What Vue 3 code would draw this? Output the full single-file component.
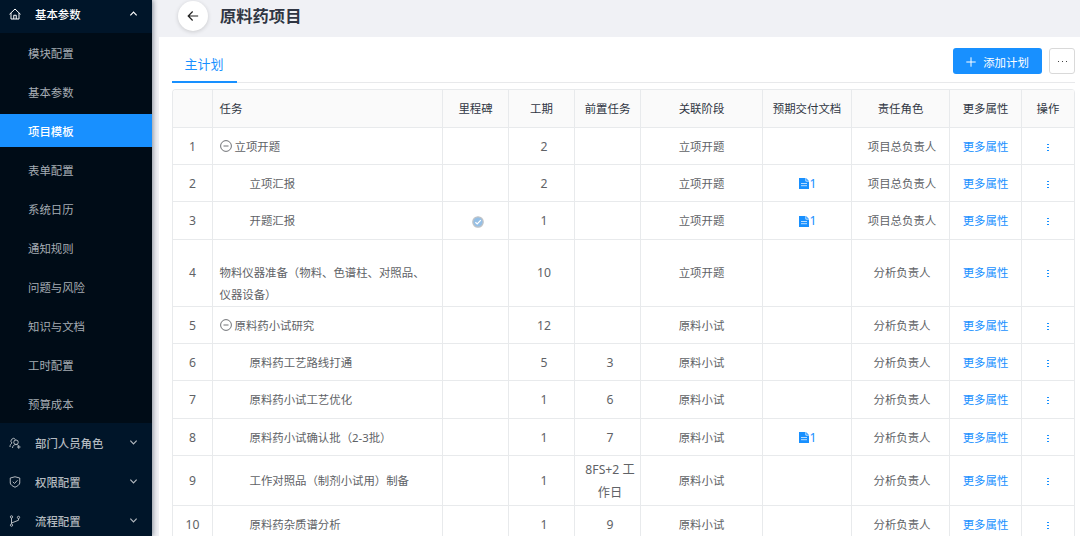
<template>
  <div class="layout">
    <aside class="sidebar">
      <template v-for="menu in menus" :key="menu.title">
        <div class="menu-title" :class="{ open: menu.children }">
          <svg class="menu-icon" viewBox="0 0 24 24">
            <path v-for="d in menu.icon" :key="d" :d="d" />
          </svg>
          <span class="menu-text">{{ menu.title }}</span>
          <svg class="arrow" viewBox="0 0 10 10">
            <path :d="menu.children ? 'M1.5 7 5 3.5 8.5 7' : 'M1.5 3 5 6.5 8.5 3'" />
          </svg>
        </div>
        <ul v-if="menu.children" class="submenu">
          <li v-for="item in menu.children" :key="item" :class="{ active: item === current }">{{ item }}</li>
        </ul>
      </template>
    </aside>

    <main class="main">
      <header class="header">
        <button class="back">
          <svg viewBox="0 0 14 14"><path d="M13 7H1.8M6.6 1.8 1.4 7l5.2 5.2" /></svg>
        </button>
        <h1>原料药项目</h1>
      </header>

      <section class="content">
        <div class="tabs">
          <div class="tab">主计划</div>
          <div class="actions">
            <button class="add">
              <svg viewBox="0 0 10 10"><path d="M5 .3v9.4M.3 5h9.4" /></svg>
              <span>添加计划</span>
            </button>
            <button class="more"><i></i><i></i><i></i></button>
          </div>
        </div>

        <div class="table">
          <div class="row head">
            <div v-for="(col, i) in columns" :key="i" class="cell" :class="{ task: i === 1 }">{{ col }}</div>
          </div>
          <div v-for="(row, i) in rows" :key="i" class="row" :class="row.size">
            <div class="cell num">{{ i + 1 }}</div>
            <div class="cell task" :class="row.type">
              <svg v-if="row.type === 'group'" class="collapse" viewBox="0 0 12 12">
                <circle cx="6" cy="6" r="5.4" />
                <path d="M3.5 6h5" />
              </svg>
              <span>{{ row.name }}</span>
            </div>
            <div class="cell shift">
              <svg v-if="row.milestone" class="milestone" viewBox="0 0 12 12">
                <circle cx="6" cy="6" r="5.2" />
                <path d="M3.4 6.3 5.2 8l3.6-3.9" />
              </svg>
            </div>
            <div class="cell shift num">{{ row.days }}</div>
            <div class="cell shift num">{{ row.prev }}</div>
            <div class="cell">{{ row.stage }}</div>
            <div class="cell">
              <span v-if="row.doc" class="doc">
                <svg viewBox="0 0 10 11">
                  <path d="M0 0h7L10 3V11H0z" fill="#1890ff" />
                  <path d="M6.8 0v3.2H10M2 5.5h6M2 7.7h6" fill="none" stroke="#fff" stroke-width=".7" />
                </svg>
                <span class="num">{{ row.doc }}</span>
              </span>
            </div>
            <div class="cell role">{{ row.role }}</div>
            <div class="cell link">更多属性</div>
            <div class="cell"><span class="dots"><i></i><i></i><i></i></span></div>
          </div>
        </div>
      </section>
    </main>
  </div>
</template>

<script setup>
import { ref } from 'vue'

const current = ref('项目模板')

const menus = [
  {
    title: '基本参数',
    icon: ['M1 12.5 12 2l11 10.5', 'M4 10v12h16V10', 'M9.5 22v-7.5h5V22'],
    children: ['模块配置', '基本参数', '项目模板', '表单配置', '系统日历', '通知规则', '问题与风险', '知识与文档', '工时配置', '预算成本']
  },
  {
    title: '部门人员角色',
    icon: ['M6 12a5 5 0 1 1 7-7', 'M2 20c0-4 1.5-6.5 4-8', 'M14 6a4.5 4.5 0 1 1 0 9 4.5 4.5 0 0 1 0-9', 'M7 22c0-4 3-7 7-7 2 0 3.5.5 5 2', 'M16 20h7M19.5 16.5v7']
  },
  {
    title: '权限配置',
    icon: ['M12 1.5 21.5 4v10c0 3-4 6-9.5 8.5C6.5 20 2.5 17 2.5 14V4z', 'M7.5 11.5l3.5 3.5 6-6.5']
  },
  {
    title: '流程配置',
    icon: ['M5 6v12', 'M5 1.5a2.3 2.3 0 1 1 0 4.6 2.3 2.3 0 0 1 0-4.6', 'M5 18a2.3 2.3 0 1 1 0 4.6A2.3 2.3 0 0 1 5 18', 'M19 2.5a2.3 2.3 0 1 1 0 4.6 2.3 2.3 0 0 1 0-4.6', 'M19 7v3.5L5 16']
  }
]

const columns = ['', '任务', '里程碑', '工期', '前置任务', '关联阶段', '预期交付文档', '责任角色', '更多属性', '操作']

const rows = [
  { name: '立项开题', type: 'group', days: 2, stage: '立项开题', role: '项目总负责人' },
  { name: '立项汇报', type: 'child', days: 2, stage: '立项开题', doc: 1, role: '项目总负责人' },
  { name: '开题汇报', type: 'child', milestone: true, days: 1, stage: '立项开题', doc: 1, role: '项目总负责人', size: 'tall' },
  { name: '物料仪器准备（物料、色谱柱、对照品、仪器设备）', type: 'wrap', days: 10, stage: '立项开题', role: '分析负责人', size: 'double' },
  { name: '原料药小试研究', type: 'group', days: 12, stage: '原料小试', role: '分析负责人' },
  { name: '原料药工艺路线打通', type: 'child', days: 5, prev: '3', stage: '原料小试', role: '分析负责人' },
  { name: '原料药小试工艺优化', type: 'child', days: 1, prev: '6', stage: '原料小试', role: '分析负责人', size: 'tall' },
  { name: '原料药小试确认批（2-3批）', type: 'child', days: 1, prev: '7', stage: '原料小试', doc: 1, role: '分析负责人' },
  { name: '工作对照品（制剂小试用）制备', type: 'child', days: 1, prev: '8FS+2 工作日', stage: '原料小试', role: '分析负责人', size: 'medium' },
  { name: '原料药杂质谱分析', type: 'child', days: 1, prev: '9', stage: '原料小试', role: '分析负责人' }
]
</script>

<style>
body {
  margin: 0;
  overflow: hidden;
}
</style>

<style scoped>
* {
  box-sizing: border-box;
}

.layout {
  display: flex;
  height: 536px;
  overflow: hidden;
  background: #f0f1f5;
  color: #606266;
  font-family: 'Noto Sans', 'Noto Sans CJK SC', sans-serif;
  font-size: 11.4px;
}

button {
  padding: 0;
  border: 0;
  font: inherit;
}

svg {
  display: block;
  flex: none;
}

/* sidebar */
.sidebar {
  z-index: 1;
  flex: none;
  width: 152px;
  background: #001529;
  color: #a6adb4;
  box-shadow: 1px 0 5px rgba(0, 21, 41, 0.45);
}

.menu-title {
  display: flex;
  align-items: center;
  height: 33px;
  margin: 0 0 6px;
  padding: 0 14px 0 9px;
  color: #b3b9bf;
  font-weight: 500;
}

.menu-title.open {
  margin: -3px 0 3px;
  color: #fff;
}

.menu-icon {
  width: 12px;
  height: 12px;
  fill: none;
  stroke: currentColor;
  stroke-width: 2;
}

.menu-text {
  flex: 1;
  margin-left: 14px;
}

.arrow {
  width: 9px;
  height: 9px;
  fill: none;
  stroke: currentColor;
  stroke-width: 1.3;
}

.submenu {
  display: flex;
  flex-direction: column;
  gap: 6px;
  margin: 0 0 3px;
  padding: 3px 0;
  list-style: none;
  background: #000c17;
}

.submenu li {
  height: 33px;
  padding-left: 28px;
  line-height: 35px;
}

.submenu .active {
  background: #1890ff;
  color: #fff;
  font-weight: 500;
}

/* page header */
.main {
  flex: 1;
  min-width: 0;
  padding-left: 7px;
}

.header {
  display: flex;
  align-items: center;
  height: 37px;
  padding: 0 0 6px 19px;
}

.back {
  display: flex;
  align-items: center;
  justify-content: center;
  width: 30px;
  height: 30px;
  border-radius: 50%;
  background: #fff;
  box-shadow: 0 1px 4px rgba(0, 0, 0, 0.16);
}

.back svg {
  width: 12px;
  height: 12px;
  fill: none;
  stroke: #222;
  stroke-width: 1.4;
}

h1 {
  margin: 0 0 0 12px;
  color: #303643;
  font-size: 16.3px;
  line-height: 30px;
}

.content {
  height: 499px;
  padding: 7px 5px 0 13px;
  background: #fff;
}

.tabs {
  display: flex;
  justify-content: space-between;
  height: 39px;
  border-bottom: 1px solid #e8e9eb;
}

.tab {
  height: 39px;
  padding: 0 13.5px 0 12.5px;
  border-bottom: 2px solid #1890ff;
  color: #1890ff;
  font-size: 13px;
  line-height: 41px;
}

.actions {
  display: flex;
  gap: 7px;
  padding-top: 4px;
}

.add {
  display: flex;
  align-items: center;
  justify-content: center;
  gap: 7px;
  width: 89px;
  height: 26px;
  padding-top: 1px;
  border-radius: 3px;
  background: #1890ff;
  color: #fff;
}

.add svg {
  width: 10px;
  height: 10px;
  fill: none;
  stroke: #fff;
  stroke-width: 1;
}

.more {
  display: flex;
  align-items: center;
  justify-content: center;
  gap: 3px;
  width: 26px;
  height: 26px;
  border: 1px solid #d9d9d9;
  border-radius: 3px;
  background: #fff;
}

.more i {
  width: 1px;
  height: 1px;
  background: #444;
}

/* plan table */
.table {
  margin-top: 6px;
  border: 1px solid #e8eaec;
  border-bottom: 0;
  border-right: 0;
  border-radius: 4px 4px 0 0;
  overflow: hidden;
}

.row {
  display: grid;
  grid-template-columns: 40px 230px 66px 66px 66px 122px 89px 98px 72px 53px;
  height: 37px;
}

.row.tall {
  height: 38px;
}

.row.medium {
  height: 50px;
}

.row.double {
  height: 67px;
}

.cell {
  display: flex;
  align-items: center;
  justify-content: center;
  min-width: 0;
  padding-top: 2px;
  border-right: 1px solid #e8eaec;
  border-bottom: 1px solid #e8eaec;
  line-height: 22.5px;
  text-align: center;
}

.head {
  height: 38px;
}

.head .cell {
  background: #fafafa;
  color: #303643;
}

.cell.task {
  justify-content: flex-start;
  padding-left: 6.5px;
  text-align: left;
}

.cell.child {
  padding-left: 36.5px;
}

.cell.wrap {
  padding: 22px 10px 0 6.5px;
  line-height: 22px;
}

.cell.shift {
  padding: 2px 2px 0 7px;
}

.cell.role {
  padding-left: 3px;
}

.double .cell:not(.wrap) {
  padding-top: 1px;
}

.num {
  font-size: 12.2px;
}

.collapse {
  width: 12px;
  height: 12px;
  margin: -2px 3px 0 0;
  fill: none;
  stroke: #606266;
  stroke-width: 0.9;
}

.milestone {
  width: 12px;
  height: 12px;
}

.milestone circle {
  fill: #94bfe6;
  stroke: #bfc3c7;
  stroke-width: 1.3;
}

.milestone path {
  fill: none;
  stroke: #fff;
  stroke-width: 1.2;
}

.doc {
  display: flex;
  align-items: center;
  color: #1890ff;
}

.doc svg {
  width: 10px;
  height: 11px;
  margin: -1px 1px 0 1px;
}

.link {
  color: #1890ff;
}

.dots {
  display: flex;
  flex-direction: column;
  gap: 2px;
}

.dots i {
  width: 2px;
  height: 1px;
  background: #1890ff;
}
</style>
